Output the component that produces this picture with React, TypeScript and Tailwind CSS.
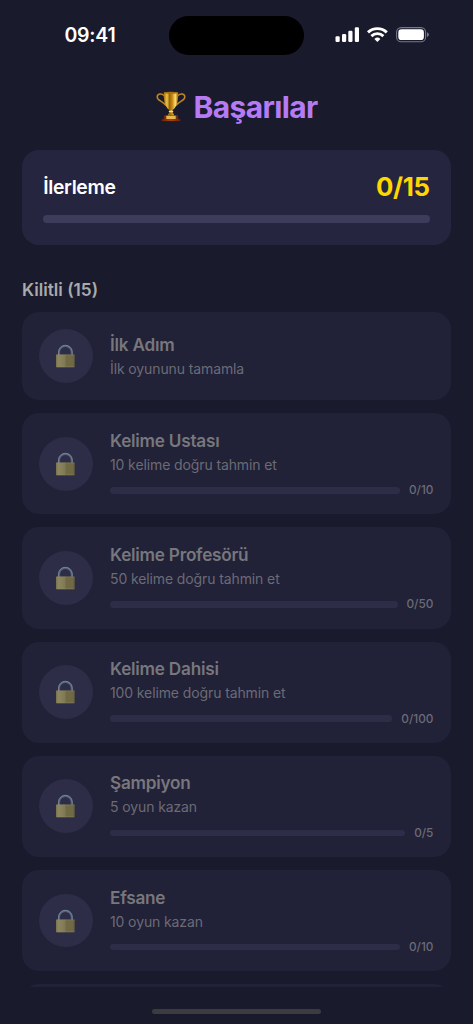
import { clsx } from "clsx";

type Achievement = {
  title: string;
  description: string;
  target?: number;
};

const achievements: Achievement[] = [
  { title: "İlk Adım", description: "İlk oyununu tamamla" },
  { title: "Kelime Ustası", description: "10 kelime doğru tahmin et", target: 10 },
  { title: "Kelime Profesörü", description: "50 kelime doğru tahmin et", target: 50 },
  { title: "Kelime Dahisi", description: "100 kelime doğru tahmin et", target: 100 },
  { title: "Şampiyon", description: "5 oyun kazan", target: 5 },
  { title: "Efsane", description: "10 oyun kazan", target: 10 },
];

function StatusBar() {
  return (
    <div className="flex h-[70px] shrink-0 items-center">
      <span className="w-[169px] pt-[2px] pl-[64.4px] text-[19.5px] font-semibold tracking-[-0.2px] text-white">
        09:41
      </span>
      <div className="h-[39px] w-[135px] rounded-full bg-black" />
      <svg width="96" height="18" viewBox="0 0 96 18" className="ml-[31px]" fill="#fff">
        <rect x="0.5" y="10.2" width="4.2" height="5.8" rx="1.2" />
        <rect x="7" y="8" width="4.2" height="8" rx="1.2" />
        <rect x="13.3" y="4.8" width="4.2" height="11.2" rx="1.2" />
        <rect x="19.8" y="1.3" width="4.2" height="14.7" rx="1.2" />
        <g fill="none" stroke="#fff" strokeWidth="2.9">
          <path d="M33 6.4a13.6 13.6 0 0 1 18.8 0" />
          <path d="M36.4 10.1a8.6 8.6 0 0 1 12 0" />
        </g>
        <path d="M42.4 16l-3-3a4.4 4.4 0 0 1 6 0z" />
        <rect x="61.6" y="1.6" width="29" height="14.2" rx="4.6" fill="none" stroke="#77778a" strokeWidth="1.1" />
        <rect x="63.3" y="3.3" width="25.6" height="10.8" rx="3.1" />
        <path d="M92 6.3q1.9 1 1.9 2.4T92 11.1z" fill="#77778a" />
      </svg>
    </div>
  );
}

function Trophy() {
  return (
    <svg width="30" height="32" viewBox="0 0 30 32">
      <defs>
        <linearGradient id="cup" x1="0" x2="1">
          <stop offset="0" stopColor="#a36a08" />
          <stop offset="0.22" stopColor="#efc548" />
          <stop offset="0.4" stopColor="#9a6208" />
          <stop offset="0.6" stopColor="#c98e1c" />
          <stop offset="0.8" stopColor="#ffdf68" />
          <stop offset="1" stopColor="#95590a" />
        </linearGradient>
        <linearGradient id="base" x1="0" x2="1">
          <stop offset="0" stopColor="#6e2208" />
          <stop offset="0.5" stopColor="#a8430f" />
          <stop offset="1" stopColor="#6e2208" />
        </linearGradient>
      </defs>
      <g fill="none" stroke="#c08724" strokeWidth="1.5" strokeLinecap="round">
        <path d="M8 4.6C5.5 1.8 1.2 2.6 1.2 5.9c0 3.6 5 3.9 8.4 8.2" />
        <path d="M22 4.6c2.5-2.8 6.8-2 6.8 1.3 0 3.6-5 3.9-8.4 8.2" />
      </g>
      <path d="M7.8 1.6h14.4c.2 8-1 14.2-5.2 17.2-.8.6-.9 1.3-.5 2.1l1.9 3.8h-6.8l1.9-3.8c.4-.8.3-1.5-.5-2.1C8.8 15.8 7.6 9.6 7.8 1.6z" fill="url(#cup)" />
      <ellipse cx="15" cy="1.8" rx="7.2" ry="1" fill="#a5700f" />
      <ellipse cx="15" cy="20.4" rx="2.4" ry="0.9" fill="#ffdc68" />
      <path d="M8.2 24.3h13.6l.8 4.7H7.4z" fill="url(#base)" />
      <path d="M10.3 24.8h9.4v3.2h-9.4z" fill="#e8b755" />
      <path d="M5.7 28.3h18.6v1.8H5.7z" fill="url(#base)" />
    </svg>
  );
}

function Lock() {
  return (
    <svg width="20" height="24" viewBox="0 0 20 24" className="-translate-x-[0.6px]">
      <defs>
        <linearGradient id="lockBody" x1="0" x2="1">
          <stop offset="0" stopColor="#77724f" />
          <stop offset="0.12" stopColor="#8d8660" />
          <stop offset="0.45" stopColor="#817b55" />
          <stop offset="0.55" stopColor="#716a48" />
          <stop offset="0.9" stopColor="#706946" />
          <stop offset="1" stopColor="#5d573d" />
        </linearGradient>
      </defs>
      <path d="M3.6 12V8.2a6.4 6.4 0 0 1 12.8 0V12" fill="none" stroke="#505d76" strokeWidth="2.2" />
      <path d="M3.2 12V8.2a6.8 6.8 0 0 1 13.6 0V12" fill="none" stroke="#8290a3" strokeWidth="0.8" />
      <rect x="0.6" y="10.5" width="18.8" height="12.8" rx="0.7" fill="url(#lockBody)" />
      <path d="M1 11h18M1 22.8h18" stroke="#928b61" strokeWidth="0.6" opacity="0.6" />
    </svg>
  );
}

function AchievementCard({ title, description, target }: Achievement) {
  return (
    <div
      className={clsx(
        "flex shrink-0 items-center gap-[17.3px] rounded-[17px] bg-[#212138] pr-[17.6px] pl-[17px]",
        target ? "h-[101.2px]" : "h-[87.8px]"
      )}
    >
      <div className="flex size-[53.7px] shrink-0 items-center justify-center rounded-full bg-[#2e2d47]">
        <Lock />
      </div>
      <div className={clsx("flex min-w-0 flex-1 flex-col", target && "pt-[1.6px]")}>
        <h3 className="text-[17.2px] leading-[20px] font-semibold tracking-[-0.24px] text-[#77777c]">{title}</h3>
        <p className="mt-[5px] text-[14px] leading-[18px] tracking-[-0.11px] text-[#6b6b75]">{description}</p>
        {target && (
          <div className="mt-[8.4px] flex items-center gap-[9px]">
            <div className="h-[6.5px] flex-1 rounded-full bg-[#2e2d47]" />
            <span className="pt-px text-[11.8px] leading-[15px] font-medium text-[#6b6b75]">0/{target}</span>
          </div>
        )}
      </div>
    </div>
  );
}

export default function App() {
  return (
    <div className="flex h-[1024px] w-[473px] flex-col overflow-hidden bg-[#1a1a2d] font-['Inter',sans-serif]">
      <StatusBar />

      <h1 className="mt-[17px] flex h-[40px] shrink-0 items-center justify-center gap-[8px] text-[30px] font-bold tracking-[-0.65px] text-[#b57bf5]">
        <Trophy />
        <span>Başarılar</span>
      </h1>

      <div className="mx-[22px] mt-[23px] h-[94.6px] shrink-0 rounded-[17px] bg-[#252540] px-[21.3px] pt-[21px]">
        <div className="flex h-[32px] items-center justify-between">
          <span className="text-[19.3px] font-semibold tracking-[-0.35px] text-white">İlerleme</span>
          <span className="pt-px text-[25.8px] font-bold tracking-[-0.3px] text-[#ffd700]">0/15</span>
        </div>
        <div className="mt-[11.5px] h-[8.6px] rounded-full bg-[#3d3c5a]" />
      </div>

      <h2 className="mx-[22px] mt-[33.2px] h-[23px] shrink-0 text-[17.2px] leading-[23px] font-semibold text-[#aaaaaa]">
        Kilitli ({15})
      </h2>

      <div className="mx-[22px] mt-[11.6px] flex h-[674.6px] shrink-0 flex-col gap-[13px] overflow-hidden">
        {achievements.map((achievement) => (
          <AchievementCard key={achievement.title} {...achievement} />
        ))}
        <div className="h-[101px] shrink-0 rounded-[17px] bg-[#212138]" />
      </div>

      <div className="mx-auto mt-[22px] h-[5.4px] w-[169px] shrink-0 rounded-full bg-[#3b3b40]" />
    </div>
  );
}
